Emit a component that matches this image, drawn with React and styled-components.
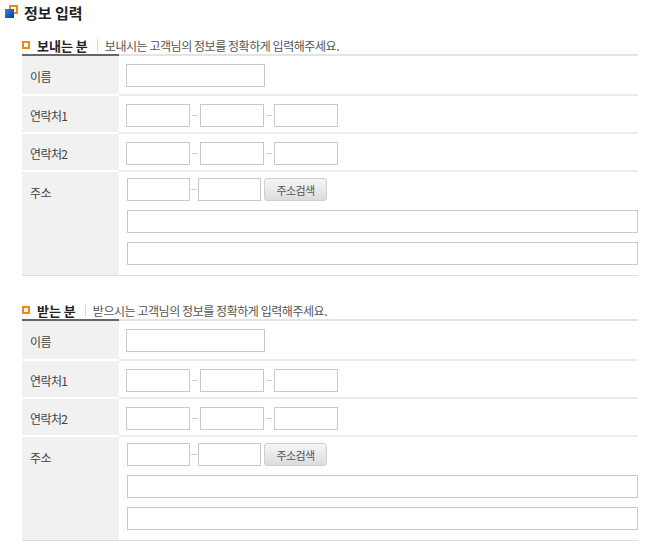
import React from 'react'
import styled, { createGlobalStyle } from 'styled-components'

const GlobalStyle = createGlobalStyle`
  body {
    margin: 0;
    background: #fff;
  }
  * {
    box-sizing: border-box;
  }
`

const Page = styled.div`
  width: 648px;
  padding: 4px 10px 12px 5px;
  font-family: "Noto Sans CJK KR", "Noto Sans", sans-serif;
  color: #333;
`

const PageTitle = styled.h2`
  display: flex;
  align-items: center;
  gap: 5px;
  height: 16px;
  margin: 0;
  font-size: 15px;
  font-weight: bold;
  color: #222;
`

const Section = styled.section`
  margin: ${(p) => (p.$first ? '16px' : '25px')} 0 0 17px;
`

const SectionHeader = styled.div`
  display: flex;
  align-items: center;
  height: 18px;
`

const Square = styled.span`
  width: 8px;
  height: 8px;
  border: 2px solid #ec8a14;
  background: #fff;
  margin-right: 7px;
`

const SectionTitle = styled.strong`
  font-size: 13px;
  font-weight: bold;
  color: #222;
`

const Divider = styled.span`
  width: 1px;
  height: 12px;
  background: #d6d6d6;
  margin: 0 7px 0 9px;
`

const Desc = styled.span`
  font-size: 12px;
  color: #555;
  letter-spacing: -0.45px;
`

const Label = styled.div`
  background: #f1f1f1;
  padding: ${(p) => p.$pt || '12px'} 0 0 8px;
  font-size: 12px;
  line-height: 16px;
  color: #444;
  letter-spacing: -0.6px;
  border-bottom: 2px solid #fff;
`

const Field = styled.div`
  padding: ${(p) => p.$pad || '8px 7px 5px'};
  border-bottom: 2px solid #ececec;
  display: flex;
  flex-direction: ${(p) => (p.$stack ? 'column' : 'row')};
  align-items: ${(p) => (p.$stack ? 'stretch' : 'center')};
  gap: ${(p) => (p.$stack ? '9px' : '0')};
`

const Row = styled.div`
  display: grid;
  grid-template-columns: 97px 1fr;

  &:first-child ${Label} {
    border-top: 2px solid #666;
  }
  &:first-child ${Field} {
    border-top: 2px solid #e4e4e4;
  }
  &:last-child ${Label}, &:last-child ${Field} {
    border-bottom: 1px solid #dcdcdc;
  }
`

const Table = styled.div`
  width: 616px;
`

const Input = styled.input`
  width: ${(p) => p.$w || '100%'};
  height: 23px;
  border: 1px solid #c9c9c9;
  background: #fff;
  padding: 0 4px;
  font-size: 12px;
  outline: none;
`

const InputLine = styled.div`
  display: flex;
  align-items: center;
`

const Dash = styled.span`
  width: ${(p) => p.$w || '10px'};
  display: flex;
  justify-content: center;
  &::before {
    content: '';
    width: 6px;
    height: 1px;
    background: #cfcfcf;
  }
`

const SearchButton = styled.button`
  width: 63px;
  height: 23px;
  margin-left: 3px;
  border: 1px solid #cfcfcf;
  border-radius: 3px;
  background: linear-gradient(#f6f6f6, #dcdcdc);
  font-family: inherit;
  font-size: 11px;
  color: #555;
  letter-spacing: -0.6px;
  padding: 0;
  cursor: pointer;
`

const TitleIcon = () => (
  <svg width="14" height="14" viewBox="0 0 14 14">
    <defs>
      <linearGradient id="blueSq" x1="0" y1="0" x2="1" y2="1">
        <stop offset="0" stopColor="#3a86d8" />
        <stop offset="1" stopColor="#0b3f8c" />
      </linearGradient>
    </defs>
    <rect x="5" y="1" width="7" height="7" fill="#fff" stroke="#ec8a14" strokeWidth="2" />
    <rect x="0" y="4" width="9" height="9" fill="url(#blueSq)" />
  </svg>
)

const PhoneRow = ({ label }) => (
  <Row>
    <Label>{label}</Label>
    <Field>
      <Input $w="64px" />
      <Dash />
      <Input $w="64px" />
      <Dash />
      <Input $w="64px" />
    </Field>
  </Row>
)

const PersonForm = ({ first, title, desc }) => (
  <Section $first={first}>
    <SectionHeader>
      <Square />
      <SectionTitle>{title}</SectionTitle>
      <Divider />
      <Desc>{desc}</Desc>
    </SectionHeader>
    <Table>
      <Row>
        <Label $pt="13px">이름</Label>
        <Field $pad="8px 7px 7px">
          <Input $w="139px" />
        </Field>
      </Row>
      <PhoneRow label="연락처1" />
      <PhoneRow label="연락처2" />
      <Row>
        <Label $pt="13px">주소</Label>
        <Field $stack $pad="6px 0 10px 8px">
          <InputLine>
            <Input $w="63px" />
            <Dash $w="8px" />
            <Input $w="63px" />
            <SearchButton type="button">주소검색</SearchButton>
          </InputLine>
          <Input />
          <Input />
        </Field>
      </Row>
    </Table>
  </Section>
)

export default function App() {
  return (
    <Page>
      <GlobalStyle />
      <PageTitle>
        <TitleIcon />
        정보 입력
      </PageTitle>
      <PersonForm
        first
        title="보내는 분"
        desc="보내시는 고객님의 정보를 정확하게 입력해주세요."
      />
      <PersonForm
        title="받는 분"
        desc="받으시는 고객님의 정보를 정확하게 입력해주세요."
      />
    </Page>
  )
}
